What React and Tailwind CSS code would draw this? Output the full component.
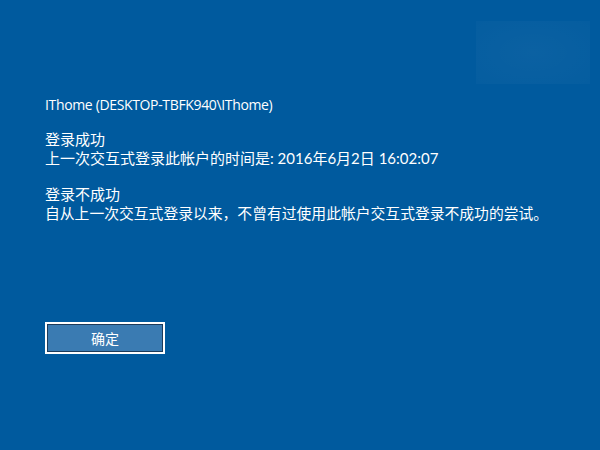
export default function App() {
  return (
    <div
      className="w-[600px] h-[450px] bg-[#005a9e] text-white relative overflow-hidden"
      style={{ fontFamily: 'Lato, "Noto Sans CJK SC", sans-serif' }}
    >
      <div className="absolute left-[476px] top-[21px] w-[114px] h-[63px] bg-[radial-gradient(ellipse_at_center,rgba(255,255,255,0.045),rgba(255,255,255,0.02))]" />
      <div className="flex flex-col pl-[45px] pt-[95px] text-[15px] leading-[19px]">
        <div className="text-[14px] tracking-[-0.35px] font-['Open_Sans',sans-serif]">IThome (DESKTOP-TBFK940\IThome)</div>
        <div className="mt-[16px]">登录成功</div>
        <div>上一次交互式登录此帐户的时间是: 2016年6月2日 16:02:07</div>
        <div className="mt-[17px]">登录不成功</div>
        <div className="text-[14.8px]">自从上一次交互式登录以来，不曾有过使用此帐户交互式登录不成功的尝试。</div>
        <button className="mt-[99px] w-[120px] h-[32px] border-2 border-white bg-[#3a7bb2] text-[14px] text-white outline outline-1 outline-[#1b3a5a] -outline-offset-[3px]">
          确定
        </button>
      </div>
    </div>
  );
}
